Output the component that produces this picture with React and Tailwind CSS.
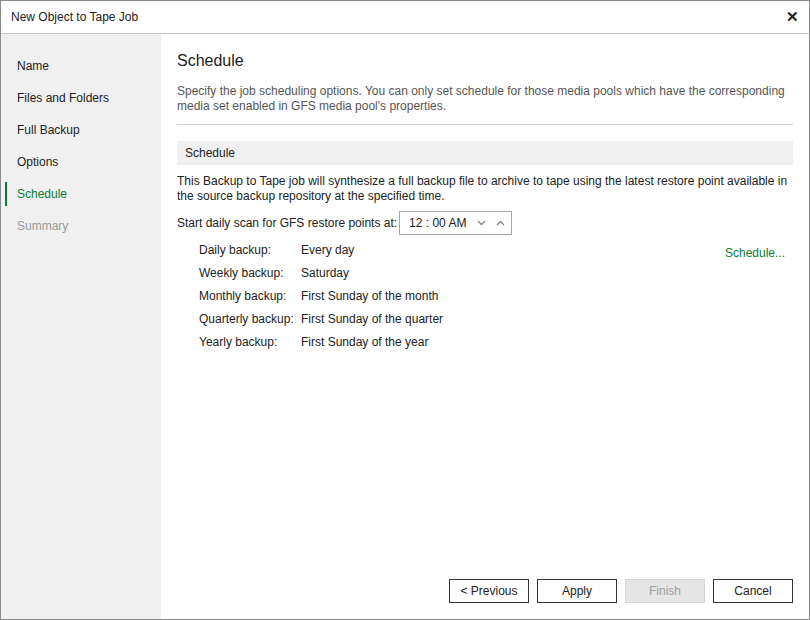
import React from 'react';

const NAV = [
  { label: 'Name' },
  { label: 'Files and Folders' },
  { label: 'Full Backup' },
  { label: 'Options' },
  { label: 'Schedule', active: true },
  { label: 'Summary', disabled: true },
];

const ROWS = [
  ['Daily backup:', 'Every day'],
  ['Weekly backup:', 'Saturday'],
  ['Monthly backup:', 'First Sunday of the month'],
  ['Quarterly backup:', 'First Sunday of the quarter'],
  ['Yearly backup:', 'First Sunday of the year'],
];

const Btn = ({ children, disabled }) => (
  <button
    className={`w-[80px] h-[24px] text-[12px] border ${disabled ? 'bg-[#e6e6e6] border-[#d6d6d6] text-[#a0a0a0]' : 'bg-white border-[#333] text-[#222]'}`}
  >
    {children}
  </button>
);

export default function App() {
  return (
    <div
      className="w-[810px] h-[620px] border border-[#8a8a8a] bg-white flex flex-col text-[12px] text-[#222]"
      style={{ fontFamily: '"Liberation Sans", Arial, sans-serif' }}
    >
      <div className="h-[33px] border-b border-[#c8c8c8] flex items-center justify-between pl-[10px] pr-[10px] shrink-0">
        <span>New Object to Tape Job</span>
        <span className="text-[15px] font-bold">✕</span>
      </div>
      <div className="flex flex-1 min-h-0">
        <div className="w-[160px] bg-[#f0f0f0] pt-[16px] shrink-0">
          {NAV.map((n) => (
            <div key={n.label} className="h-[32px] flex items-center relative">
              {n.active && <div className="absolute left-[4px] top-[4px] bottom-[4px] w-[2px] bg-[#0a7a3a]" />}
              <span className={`pl-[16px] ${n.active ? 'text-[#0a7a3a]' : n.disabled ? 'text-[#999]' : ''}`}>{n.label}</span>
            </div>
          ))}
        </div>
        <div className="flex-1 flex flex-col pl-[16px] pr-[16px] pt-[16px] pb-[16px]">
          <div className="text-[16px] leading-[22px]">Schedule</div>
          <p className="text-[#555] leading-[15px] mt-[12px]">
            Specify the job scheduling options. You can only set schedule for those media pools which have the corresponding media set enabled in GFS media pool's properties.
          </p>
          <div className="border-t border-[#d0d0d0] mt-[10px]" />
          <div className="bg-[#f0f0f0] h-[24px] mt-[16px] flex items-center px-[8px]">Schedule</div>
          <p className="leading-[15px] mt-[9px]">
            This Backup to Tape job will synthesize a full backup file to archive to tape using the latest restore point available in the source backup repository at the specified time.
          </p>
          <div className="flex items-center gap-[2px] mt-[7px]">
            <span>Start daily scan for GFS restore points at:</span>
            <div className="w-[113px] h-[24px] border border-[#a8a8a8] flex items-center pl-[9px] pr-[6px] justify-between">
              <span>12 : 00 AM</span>
              <span className="flex gap-[10px]">
                <svg width="9" height="6" viewBox="0 0 9 6"><path d="M1 1l3.5 3.5L8 1" stroke="#888" strokeWidth="1.3" fill="none" /></svg>
                <svg width="9" height="6" viewBox="0 0 9 6"><path d="M1 5l3.5-3.5L8 5" stroke="#888" strokeWidth="1.3" fill="none" /></svg>
              </span>
            </div>
          </div>
          <div className="flex mt-[3px]">
            <div className="pl-[22px] flex-1">
              {ROWS.map(([k, v]) => (
                <div key={k} className="flex h-[23px] items-center">
                  <span className="w-[102px]">{k}</span>
                  <span>{v}</span>
                </div>
              ))}
            </div>
            <div className="text-[#0a7a3a] pt-[6px] pr-[8px]">Schedule...</div>
          </div>
          <div className="flex-1" />
          <div className="flex justify-end gap-[8px]">
            <Btn>&lt; Previous</Btn>
            <Btn>Apply</Btn>
            <Btn disabled>Finish</Btn>
            <Btn>Cancel</Btn>
          </div>
        </div>
      </div>
    </div>
  );
}
